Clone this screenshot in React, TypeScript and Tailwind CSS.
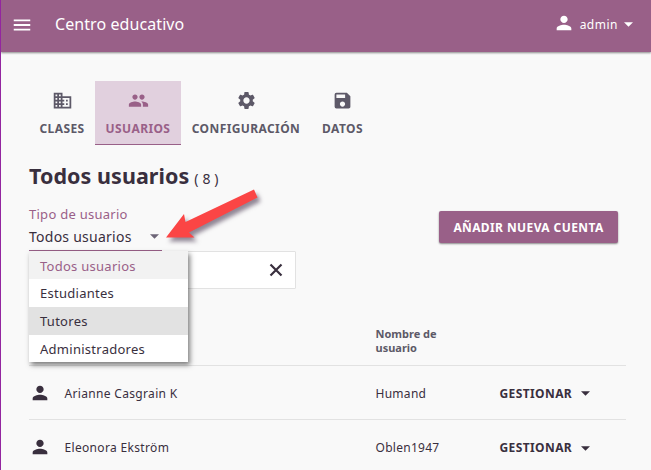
import type { ReactNode } from "react";
import { MdMenu, MdBusiness, MdSettings, MdSave, MdPerson } from "react-icons/md";

function Caret({ className = "" }: { className?: string }) {
  return (
    <svg viewBox="0 0 10 5" className={`h-[5px] w-[9px] shrink-0 ${className}`} fill="currentColor">
      <path d="M0 0h10L5 5z" />
    </svg>
  );
}

function PeopleIcon() {
  return (
    <svg viewBox="0 0 24 24" className="size-[21px]" fill="currentColor">
      <path d="M16 11c1.66 0 2.99-1.34 2.99-3S17.660 5 16 5c-1.660 0-3 1.340-3 3s1.340 3 3 3zm-8 0c1.660 0 2.990-1.340 2.990-3S9.660 5 8 5C6.340 5 5 6.340 5 8s1.340 3 3 3zm0 2c-2.330 0-7 1.170-7 3.500V19h14v-2.500c0-2.330-4.670-3.500-7-3.500zm8 0c-.29 0-.62.02-.97.05 1.160.84 1.970 1.970 1.970 3.450V19h6v-2.500c0-2.330-4.670-3.500-7-3.500z" />
    </svg>
  );
}

function CloseIcon() {
  return (
    <svg viewBox="0 0 20 20" className="size-5" fill="none" stroke="currentColor" strokeWidth="2.2">
      <path d="M4.500 4.500l11 11M15.500 4.500l-11 11" />
    </svg>
  );
}

function Tab({ icon, label, width, active = false }: { icon: ReactNode; label: string; width: string; active?: boolean }) {
  return (
    <div
      className={`flex h-16 flex-col items-center border-b pt-[9px] ${width} ${
        active ? "border-[#996088] bg-[#e1d0de] text-[#996088]" : "border-transparent text-[#5d5968]"
      }`}
    >
      {icon}
      <span className="mt-[10px] text-[12px] leading-4 font-bold tracking-[0.4px] whitespace-nowrap">{label}</span>
    </div>
  );
}

function Row({ name, user, last = false }: { name: string; user: string; last?: boolean }) {
  return (
    <div className={`flex h-[54px] items-center text-[12px] ${last ? "" : "border-b border-[#e2e2e2]"}`}>
      <MdPerson className="size-[22px] shrink-0" />
      <span className="mt-[2px] ml-[13.500px] w-[311px] tracking-[0.33px]">{name}</span>
      <span className="mt-[2px] w-[124px] tracking-[0.28px]">{user}</span>
      <span className="mt-[2px] font-bold tracking-[0.4px]">GESTIONAR</span>
      <Caret className="mt-[2px] ml-[9px]" />
    </div>
  );
}

export default function App() {
  return (
    <div className="h-[470px] w-[651px] overflow-hidden border-l border-[#9325a0] bg-[#f9f9f9] font-['Noto_Sans',sans-serif] text-[#392f3e]">
      <header className="flex h-[52px] items-center bg-[#996088] text-white shadow-[0_1px_2px_rgba(0,0,0,0.45)]">
        <MdMenu className="mb-[2px] ml-[10px] size-[22px]" />
        <h1 className="ml-[22px] grow pb-[4px] text-[16px] tracking-[0.08px]">Centro educativo</h1>
        <MdPerson className="mb-[6px] size-[22px]" />
        <span className="mb-[2px] ml-[5px] text-[12px] tracking-[0.5px]">admin</span>
        <Caret className="mr-[18px] mb-[3px] ml-[6px]" />
      </header>
      <main className="pr-[25px] pl-7">
        <nav className="mt-[29px] flex">
          <Tab icon={<MdBusiness className="size-[21px]" />} label="CLASES" width="w-[66px]" />
          <Tab icon={<PeopleIcon />} label="USUARIOS" width="w-[86px]" active />
          <Tab icon={<MdSettings className="size-[21px]" />} label="CONFIGURACIÓN" width="w-[130px]" />
          <Tab icon={<MdSave className="size-[21px]" />} label="DATOS" width="w-[63px]" />
        </nav>
        <div className="mt-[15px] flex h-8 items-baseline">
          <h2 className="text-[21.500px] leading-8 font-bold tracking-[0.05px]">Todos usuarios</h2>
          <span className="ml-[5px] text-[14px] tracking-[0.1px]">( 8 )</span>
        </div>
        <div className="relative flex h-[59px] justify-between">
          <div className="w-[133px] border-b border-[#996088] pt-[13px]">
            <div className="text-[13px] leading-[18px] tracking-[0.27px] text-[#996088]">Tipo de usuario</div>
            <div className="flex h-[27px] items-center justify-between pr-[3px] pb-px">
              <span className="text-[14px] tracking-[0.25px]">Todos usuarios</span>
              <Caret className="text-[#6d6577]" />
            </div>
          </div>
          <button className="mt-[19px] mr-[8px] h-8 w-[179px] rounded-[2px] bg-[#996088] pt-px text-[12px] font-bold tracking-[0.4px] whitespace-nowrap text-white shadow-[0_1px_2px_rgba(0,0,0,0.45)]">
            AÑADIR NUEVA CUENTA
          </button>
          <svg className="absolute top-[-8px] left-[126px] h-[70px] w-[120px] drop-shadow-[3px_4px_2px_rgba(40,20,50,0.5)]" viewBox="155 184 120 70" fill="#fb4545">
            <path d="M166 237.500L184 214L185.500 222L254 189.500L257.500 197.500L189 232.500L194.500 237.500Z" />
          </svg>
          <ul className="absolute top-[59px] left-0 z-10 w-[159px] bg-white text-[13px] tracking-[0.27px] shadow-[2px_3px_5px_rgba(0,0,0,0.5)]">
            <li className="flex h-7 items-center bg-[#f2f2f2] pt-[4px] pl-[11px] text-[#996088]">Todos usuarios</li>
            <li className="flex h-7 items-center pt-[2px] pl-[11px]">Estudiantes</li>
            <li className="flex h-7 items-center bg-[#e2e2e2] pt-[2px] pl-[11px]">Tutores</li>
            <li className="flex h-[27px] items-center pt-[2px] pl-[11px]">Administradores</li>
          </ul>
        </div>
        <div className="flex h-[38px] w-[267px] items-center justify-end rounded-[1px] border border-[#e2e2e2] bg-white pr-[9px]">
          <CloseIcon />
        </div>
        <div className="flex h-[77px] items-end border-b border-[#e2e2e2] pb-[10px] pl-[346.500px] text-[11px] leading-[14px] font-bold text-[#5d5968]">
          <span className="w-[70px]">Nombre de usuario</span>
        </div>
        <Row name="Arianne Casgrain K" user="Humand" />
        <Row name="Eleonora Ekström" user="Oblen1947" last />
      </main>
    </div>
  );
}
